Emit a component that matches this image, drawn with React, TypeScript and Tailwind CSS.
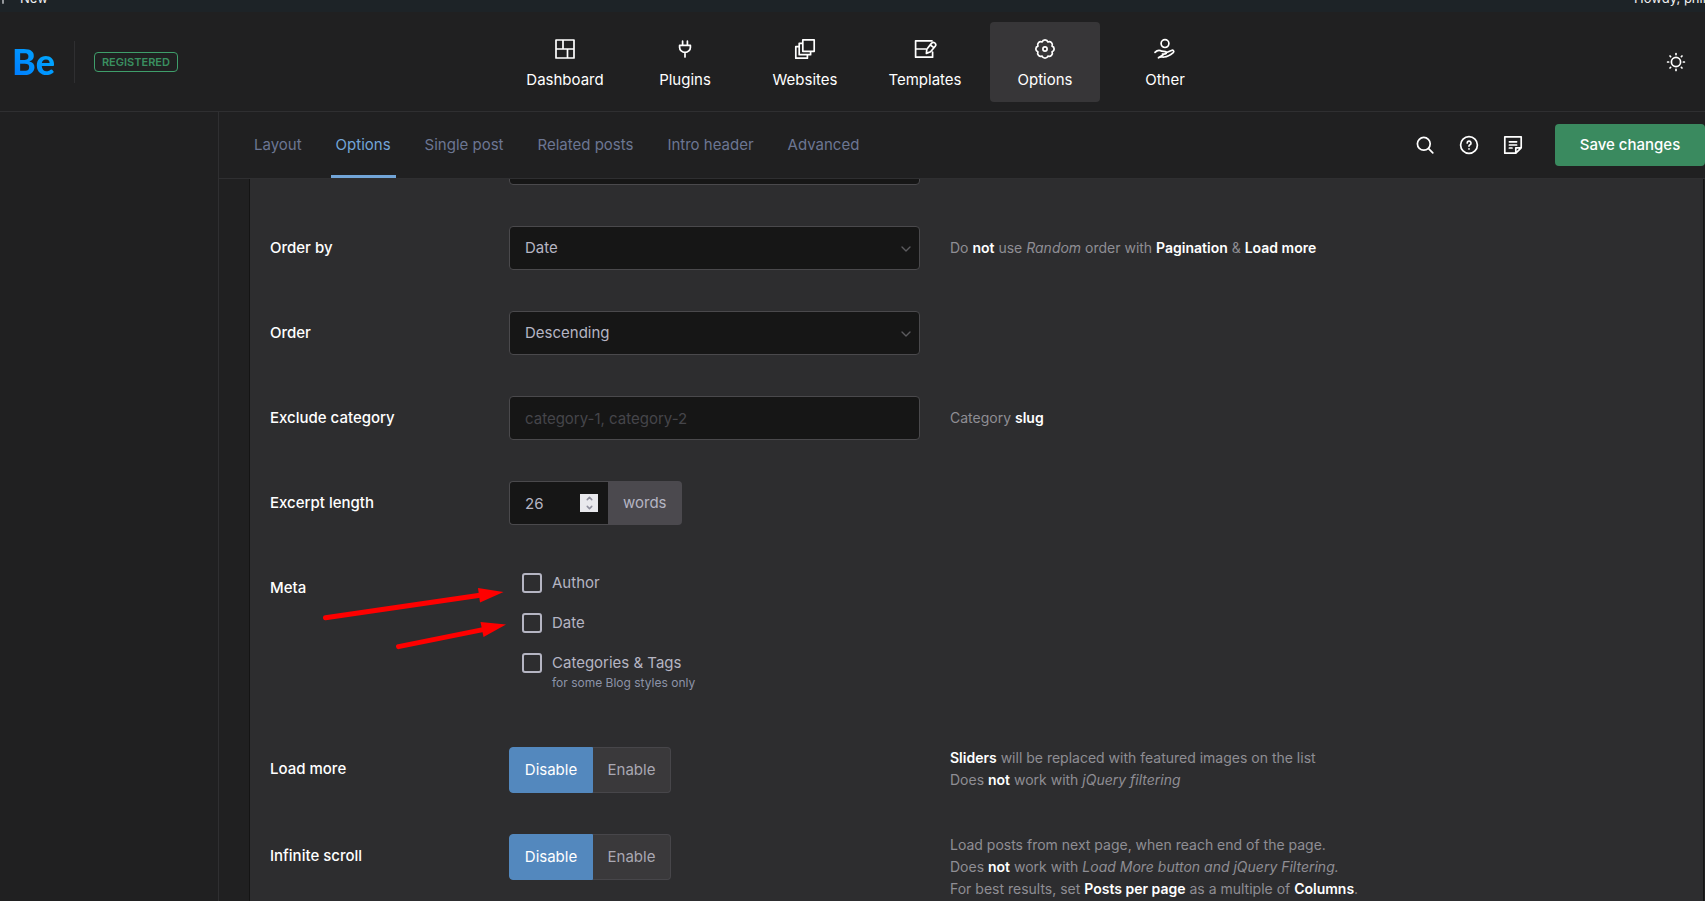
import React, { useState } from 'react';
import { ChevronDown, ChevronUp, Plus } from 'lucide-react';

type IconProps = { className?: string };

const Svg: React.FC<IconProps & { children: React.ReactNode }> = ({ className = 'size-6', children }) => (
  <svg
    className={className}
    viewBox="0 0 24 24"
    fill="none"
    stroke="currentColor"
    strokeWidth="1.7"
    strokeLinecap="round"
    strokeLinejoin="round"
    aria-hidden="true"
  >
    {children}
  </svg>
);

const DashboardIcon = () => (
  <Svg>
    <path d="M3 3h18v18H3zM3 12h18M10 3v9M14.5 12v9" />
  </Svg>
);

const PluginsIcon = () => (
  <Svg>
    <path d="M6.6 8.4h10.8v2a5.4 5 0 0 1-10.8 0zM9.6 4.2v4M14.4 4.2v4M12 15.6V20" />
  </Svg>
);

const WebsitesIcon = () => (
  <Svg>
    <path d="M9.8 2.9h11.4v11.4H9.8zM9.8 6.3H6.2v11.4h11.4v-3.4M6.2 9.7H2.8v11.5h11.6v-3.5" />
  </Svg>
);

const TemplatesIcon = () => (
  <Svg>
    <path d="M19 3.8H2.6v16.4h17V15M2.6 12h10.2" />
    <path d="M13.4 16.4l.4-4.2 4.6-5.8a2.2 2.2 0 0 1 3.8 2.8l-4.6 5.6zM17.4 8l3.4 2.6" />
  </Svg>
);

const OptionsIcon = () => (
  <Svg>
    <path d="M9.09 4.98a3.05 3.05 0 0 1 5.82 0a3.05 3.05 0 0 1 4.11 4.11a3.05 3.05 0 0 1 0 5.82a3.05 3.05 0 0 1-4.11 4.11a3.05 3.05 0 0 1-5.82 0a3.05 3.05 0 0 1-4.11-4.11a3.05 3.05 0 0 1 0-5.82a3.05 3.05 0 0 1 4.11-4.11z" />
    <circle cx="12" cy="12" r="2.1" />
  </Svg>
);

const OtherIcon = () => (
  <Svg>
    <circle cx="12" cy="6.6" r="3.9" />
    <path d="M2 15.4c2-2.2 4.6-2.6 6.800-1.200l3.600.4c1.400.2 1.400 2 0 2.200l-3 .2M13.600 15.600l4.800-2.200c1.800-.8 3.200.8 1.800 2.200-2.800 2.400-5.600 4.200-9 4.400-2.200.2-4-.6-5.800.8z" />
  </Svg>
);

const SearchIcon = () => (
  <Svg>
    <circle cx="10.8" cy="10.8" r="6.4" />
    <path d="M15.6 15.6l4.200 4.200" />
  </Svg>
);

const HelpIcon = () => (
  <Svg>
    <circle cx="12" cy="12" r="8.4" />
    <path d="M10.2 10a1.900 1.900 0 1 1 2.800 1.700c-.7.4-1 .7-1 1.400M12 15.800v.1" />
  </Svg>
);

const NotesIcon = () => (
  <Svg>
    <path d="M3.8 3.8h16.400v11l-5.400 5.400h-11zM20.200 14.800h-5.400v5.400M8.400 8.800h7.200M8.400 12h7.200M8.400 15h2.600" />
  </Svg>
);

const SunIcon = () => (
  <Svg>
    <circle cx="12" cy="12" r="4.6" />
    <path d="M12 3.600v1M12 19.400v1M3.600 12h1M19.400 12h1M6 6l.6.6M17.400 17.400l.6.6M6 18l.6-.6M17.400 6.600L18 6" />
  </Svg>
);

const navItems = [
  { label: 'Dashboard', icon: DashboardIcon },
  { label: 'Plugins', icon: PluginsIcon },
  { label: 'Websites', icon: WebsitesIcon },
  { label: 'Templates', icon: TemplatesIcon },
  { label: 'Options', icon: OptionsIcon },
  { label: 'Other', icon: OtherIcon },
];

const tabs = ['Layout', 'Options', 'Single post', 'Related posts', 'Intro header', 'Advanced'];

const fieldClass =
  'h-11 w-full appearance-none rounded-sm border border-[#4a494c] bg-[#161616] px-[15px] text-[#b5b5c3] placeholder:text-[#45454a] focus:outline-none focus:border-[#72a5d8]';

interface RowProps {
  label: string;
  htmlFor?: string;
  desc?: React.ReactNode;
  children: React.ReactNode;
}

const FormRow: React.FC<RowProps> = ({ label, htmlFor, desc, children }) => (
  <div className="flex px-5 pb-[41px]">
    <div className="w-[239px] shrink-0 pt-[11px] font-medium text-white">
      {htmlFor ? <label htmlFor={htmlFor}>{label}</label> : <span>{label}</span>}
    </div>
    <div className="w-[411px] shrink-0">{children}</div>
    <div className="min-w-0 flex-1 pl-[30px] text-sm leading-[22px] text-[#8f8e94] [&_b]:font-semibold [&_b]:text-white">
      {desc}
    </div>
  </div>
);

const SelectField: React.FC<{ id: string; options: string[]; label?: string }> = ({ id, options, label }) => (
  <div className="relative">
    <select id={id} aria-label={label} className={fieldClass}>
      {options.map((option) => (
        <option key={option}>{option}</option>
      ))}
    </select>
    <ChevronDown
      size={16}
      className="pointer-events-none absolute right-[6px] top-[15px] text-[#5c5b5f]"
    />
  </div>
);

const Toggle: React.FC<{ label: string }> = ({ label }) => {
  const [enabled, setEnabled] = useState(false);
  const on = 'bg-[#5388be] text-white border-[#5388be]';
  const off = 'bg-[#3a393b] text-[#a9a8b3] border-[#47464a]';

  return (
    <div role="group" aria-label={label} className="flex h-[46px]">
      <button
        type="button"
        aria-pressed={!enabled}
        onClick={() => setEnabled(false)}
        className={`w-[84px] rounded-l-sm border ${enabled ? off : on}`}
      >
        Disable
      </button>
      <button
        type="button"
        aria-pressed={enabled}
        onClick={() => setEnabled(true)}
        className={`w-[78px] rounded-r-sm border border-l-0 ${enabled ? on : off}`}
      >
        Enable
      </button>
    </div>
  );
};

const Checkbox: React.FC<{ label: string; hint?: string }> = ({ label, hint }) => (
  <label className="flex items-start gap-2.5 leading-5 text-[#b5b5c3]">
    <input
      type="checkbox"
      className="size-5 shrink-0 appearance-none rounded-[3px] border-2 border-[#b5b5c3] checked:bg-[#5388be]"
    />
    <span>
      {label}
      {hint && <span className="block text-xs leading-5 text-[#8c93a8]">{hint}</span>}
    </span>
  </label>
);

const Arrows = () => (
  <svg
    className="pointer-events-none absolute left-[323px] top-[585px]"
    width="186"
    height="66"
    viewBox="323 585 186 66"
    fill="#fe0000"
    stroke="#fe0000"
    aria-hidden="true"
  >
    <path d="M325.5 617.8L480 595.2" strokeWidth="5" strokeLinecap="round" />
    <path d="M478 588l25.5 4L480 602.5z" stroke="none" />
    <path d="M398.5 646.6L483 629.6" strokeWidth="5" strokeLinecap="round" />
    <path d="M480.5 622l25.5 2.5-22.5 12.5z" stroke="none" />
  </svg>
);

export default function App() {
  const [activeNav, setActiveNav] = useState('Options');
  const [activeTab, setActiveTab] = useState('Options');
  const [words, setWords] = useState(26);

  return (
    <div className="relative flex h-screen flex-col overflow-hidden bg-[#202021] font-[Inter,sans-serif] text-[15px] leading-[22px] text-white">
      {/* Admin bar, scrolled mostly out of view */}
      <div className="flex h-3 shrink-0 items-end justify-between overflow-hidden bg-[#1d2327] pb-1.5 text-[13px] leading-4 text-[#f0f0f1]">
        <span className="flex items-end gap-2.5">
          <Plus size={14} strokeWidth={3} className="-ml-1 text-[#a7aaad]" />
          New
        </span>
        <span className="-mr-1 whitespace-nowrap">Howdy, phili</span>
      </div>

      {/* Header */}
      <header className="-mr-[25px] grid h-[100px] shrink-0 grid-cols-[1fr_auto_1fr] items-center border-b border-[#2f2f31]">
        <div className="flex items-center pl-3">
          <a
            href="#"
            className="bg-linear-to-tr from-[#0074ff] to-[#00b4ff] bg-clip-text pb-0.5 font-[Lato,sans-serif] text-4xl font-black text-transparent"
          >
            Be
          </a>
          <span className="ml-[19px] h-[42px] w-px bg-[#2f2f31]" />
          <span className="ml-[19px] rounded border border-[#3f9e6b] px-[7px] text-[11px] leading-[18px] font-semibold text-[#3a8f60]">
            REGISTERED
          </span>
        </div>
        <nav className="flex gap-2.5">
          {navItems.map(({ label, icon: Icon }) => (
            <button
              key={label}
              type="button"
              onClick={() => setActiveNav(label)}
              className={`flex h-20 w-[110px] flex-col items-center gap-2 rounded-sm pt-[15px] ${
                activeNav === label ? 'bg-[#373638]' : ''
              }`}
            >
              <Icon />
              <span>{label}</span>
            </button>
          ))}
        </nav>
        <div className="flex justify-end pr-[42px]">
          <button type="button" aria-label="Toggle theme">
            <SunIcon />
          </button>
        </div>
      </header>

      <div className="flex min-h-0 flex-1">
        <aside className="w-[219px] shrink-0 border-r border-[#2f2f31]" />

        <div className="flex min-w-0 flex-1 flex-col">
          {/* Tabs and actions */}
          <div className="flex h-[67px] shrink-0 items-center justify-between border-b border-[#2f2f31] pl-[30px]">
            <div role="tablist" className="flex h-full gap-6">
              {tabs.map((tab) => (
                <button
                  key={tab}
                  type="button"
                  role="tab"
                  aria-selected={activeTab === tab}
                  onClick={() => setActiveTab(tab)}
                  className={`border-y-[3px] border-t-transparent px-[5px] ${
                    activeTab === tab
                      ? 'border-b-[#72a5d8] text-[#72a5d8]'
                      : 'border-b-transparent text-[#6c7693]'
                  }`}
                >
                  {tab}
                </button>
              ))}
            </div>
            <div className="flex items-center">
              <div className="flex gap-5 pr-[30px]">
                <button type="button" aria-label="Search">
                  <SearchIcon />
                </button>
                <button type="button" aria-label="Help">
                  <HelpIcon />
                </button>
                <button type="button" aria-label="Notes">
                  <NotesIcon />
                </button>
              </div>
              <button
                type="button"
                className="h-[42px] w-[150px] rounded-sm bg-[#3a8a5f] font-medium text-white"
              >
                Save changes
              </button>
            </div>
          </div>

          {/* Options panel */}
          <main className="ml-[30px] mr-px min-h-0 flex-1 overflow-hidden border-x border-[#141414] bg-[#2d2d2f]">
            <div className="-mt-[38px]">
              <FormRow label="">
                <SelectField id="style" label="Style" options={['']} />
              </FormRow>
              <FormRow
                label="Order by"
                htmlFor="order-by"
                desc={
                  <p className="pt-[11px]">
                    Do <b>not</b> use <em>Random</em> order with <b>Pagination</b> &amp; <b>Load more</b>
                  </p>
                }
              >
                <SelectField id="order-by" options={['Date', 'Title', 'Random']} />
              </FormRow>
              <FormRow label="Order" htmlFor="order">
                <SelectField id="order" options={['Descending', 'Ascending']} />
              </FormRow>
              <FormRow
                label="Exclude category"
                htmlFor="exclude"
                desc={
                  <p className="pt-[11px]">
                    Category <b>slug</b>
                  </p>
                }
              >
                <input id="exclude" type="text" placeholder="category-1, category-2" className={fieldClass} />
              </FormRow>
              <FormRow label="Excerpt length" htmlFor="excerpt">
                <div className="flex h-11">
                  <div className="relative w-[99px]">
                    <input
                      id="excerpt"
                      type="number"
                      value={words}
                      onChange={(e) => setWords(Number(e.target.value))}
                      className="h-11 w-full appearance-none rounded-l-sm border border-r-0 border-[#4a494c] bg-[#161616] px-[15px] text-[#b5b5c3] [-moz-appearance:textfield] focus:outline-none [&::-webkit-inner-spin-button]:appearance-none"
                    />
                    <div className="absolute right-2.5 top-[13px] flex size-[18px] flex-col items-center justify-center bg-[#e9e9ed] text-[#8f8f9d]">
                      <button type="button" aria-label="Increase" onClick={() => setWords(words + 1)}>
                        <ChevronUp size={9} strokeWidth={4} className="block" />
                      </button>
                      <button type="button" aria-label="Decrease" onClick={() => setWords(words - 1)}>
                        <ChevronDown size={9} strokeWidth={4} className="block" />
                      </button>
                    </div>
                  </div>
                  <span className="flex items-center rounded-r-sm bg-[#4b494e] px-[15px] text-[#b5b5c3]">words</span>
                </div>
              </FormRow>
              <FormRow label="Meta">
                <div className="flex flex-col gap-5 pb-[13px] pl-[13px] pt-[7px]">
                  <Checkbox label="Author" />
                  <Checkbox label="Date" />
                  <Checkbox label="Categories & Tags" hint="for some Blog styles only" />
                </div>
              </FormRow>
              <FormRow
                label="Load more"
                desc={
                  <>
                    <p>
                      <b>Sliders</b> will be replaced with featured images on the list
                    </p>
                    <p>
                      Does <b>not</b> work with <em>jQuery filtering</em>
                    </p>
                  </>
                }
              >
                <Toggle label="Load more" />
              </FormRow>
              <FormRow
                label="Infinite scroll"
                desc={
                  <>
                    <p>Load posts from next page, when reach end of the page.</p>
                    <p>
                      Does <b>not</b> work with <em>Load More button and jQuery Filtering.</em>
                    </p>
                    <p>
                      For best results, set <b>Posts per page</b> as a multiple of <b>Columns</b>.
                    </p>
                  </>
                }
              >
                <Toggle label="Infinite scroll" />
              </FormRow>
            </div>
          </main>
        </div>
      </div>

      <Arrows />
    </div>
  );
}
